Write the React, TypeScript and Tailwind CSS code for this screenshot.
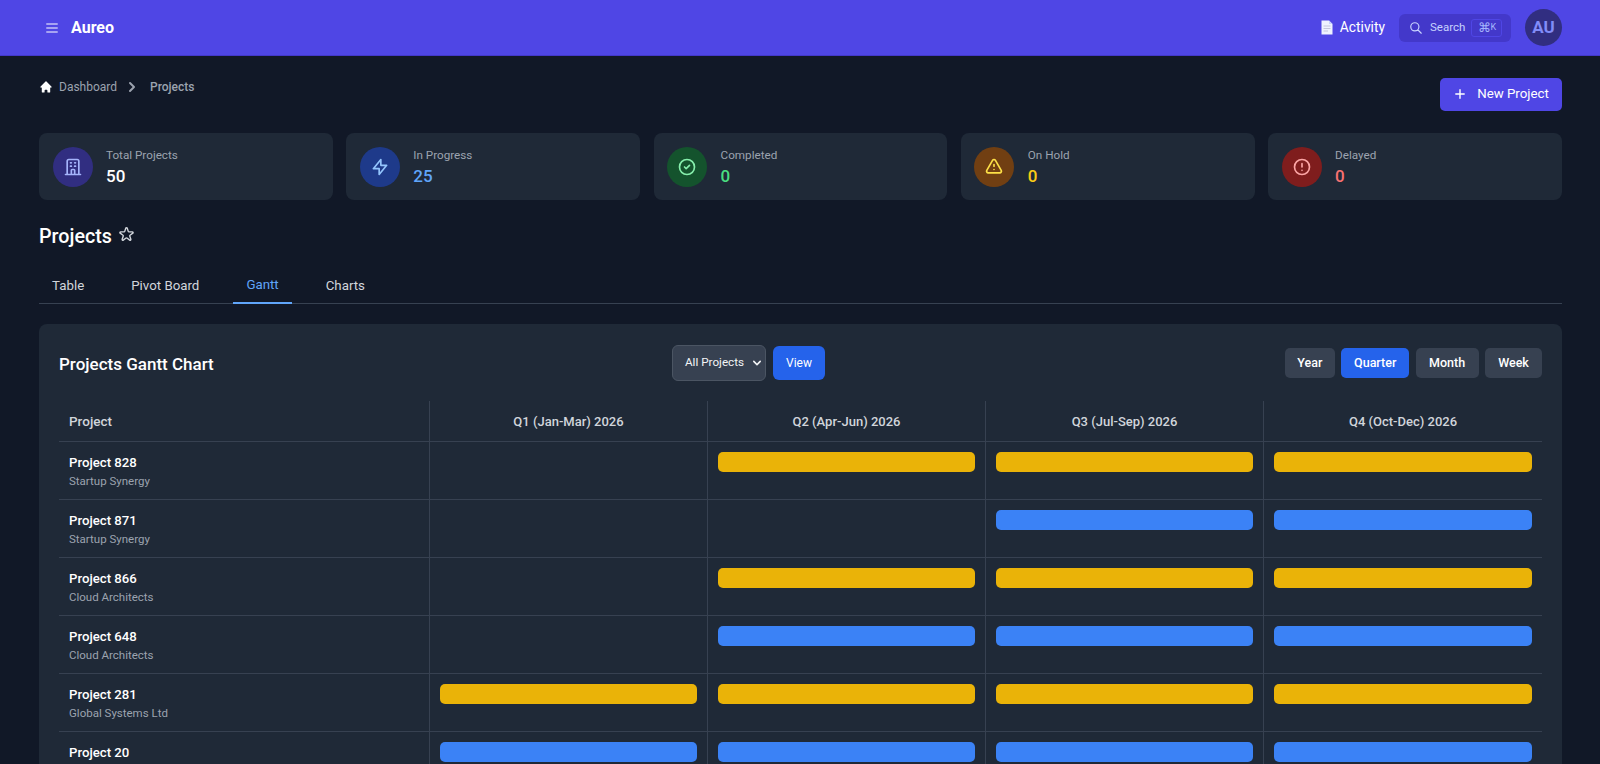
import React from "react";
import {
  HiOutlineMenu, HiOutlineSearch, HiHome, HiChevronRight, HiPlus,
  HiOutlineOfficeBuilding, HiOutlineLightningBolt, HiOutlineCheckCircle, HiOutlineExclamation,
  HiOutlineExclamationCircle, HiOutlineStar, HiChevronDown,
} from "react-icons/hi";

const stats = [
  { label: "Total Projects", value: "50", Icon: HiOutlineOfficeBuilding, circle: "bg-[#312e81]", icon: "text-[#a5b4fc]", val: "text-white" },
  { label: "In Progress", value: "25", Icon: HiOutlineLightningBolt, circle: "bg-[#1e3a8a]", icon: "text-[#93c5fd]", val: "text-[#60a5fa]" },
  { label: "Completed", value: "0", Icon: HiOutlineCheckCircle, circle: "bg-[#14532d]", icon: "text-[#86efac]", val: "text-[#4ade80]" },
  { label: "On Hold", value: "0", Icon: HiOutlineExclamation, circle: "bg-[#713f12]", icon: "text-[#fde047]", val: "text-[#facc15]" },
  { label: "Delayed", value: "0", Icon: HiOutlineExclamationCircle, circle: "bg-[#7f1d1d]", icon: "text-[#fca5a5]", val: "text-[#f87171]" },
];

const Y = "bg-[#eab308]";
const B = "bg-[#3b82f6]";
const rows: { name: string; org: string; bars: (string | null)[] }[] = [
  { name: "Project 828", org: "Startup Synergy", bars: [null, Y, Y, Y] },
  { name: "Project 871", org: "Startup Synergy", bars: [null, null, B, B] },
  { name: "Project 866", org: "Cloud Architects", bars: [null, Y, Y, Y] },
  { name: "Project 648", org: "Cloud Architects", bars: [null, B, B, B] },
  { name: "Project 281", org: "Global Systems Ltd", bars: [Y, Y, Y, Y] },
  { name: "Project 20", org: "Global Systems Ltd", bars: [B, B, B, B] },
];

function DocIcon() {
  return (
    <svg width="12" height="15" viewBox="0 0 12 15" className="mr-[7px]">
      <path d="M0.5 0.5H8L11.5 4V14.5H0.5Z" fill="#eef2ff" />
      <path d="M8 0.5V4H11.5Z" fill="#c7d2fe" />
      <path d="M2.5 6H9.5M2.5 8.5H9.5M2.5 11H7" stroke="#c4c6dc" strokeWidth="1" />
    </svg>
  );
}

export default function App() {
  return (
    <div className="h-screen overflow-hidden bg-[#111827] text-white font-['Roboto','Noto_Sans',sans-serif]">
      <header className="h-[56px] bg-[#4f46e5] border-b border-[#4338ca] flex items-center pl-[43.5px] pr-[38px]">
        <HiOutlineMenu className="w-[16px] h-[16px] text-white mr-[11.5px] [&_path]:[stroke-width:1.5]" />
        <span className="text-[16px] font-bold">Aureo</span>
        <div className="ml-auto flex items-center">
          <DocIcon />
          <span className="text-[13.8px] text-white mr-[14px]">Activity</span>
          <div className="w-[112px] h-[28px] rounded-[6px] bg-[#4338ca] flex items-center pl-[10px] text-[#c7d2fe] mr-[14px]">
            <HiOutlineSearch className="w-[14px] h-[14px] mr-[7px]" />
            <span className="text-[11.5px] mr-[6px]">Search</span>
            <span className="w-[31px] h-[18px] rounded-[3px] border border-[#4f46e5] bg-[#4338ca] text-[#a5b4fc] flex items-center justify-center leading-none">
              <span className="text-[13px]">⌘</span>
              <span className="text-[9px]">K</span>
            </span>
          </div>
          <div className="w-[37px] h-[37px] rounded-full bg-[#312e81] text-[#818cf8] flex items-center justify-center text-[17px] font-bold">AU</div>
        </div>
      </header>

      <main className="pl-[39px] pr-[38px]">
        <div className="flex items-start justify-between pt-[21.5px]">
          <nav className="flex items-center h-[18px] text-[12px] text-[#9ca3af]">
            <HiHome className="w-[14px] h-[14px] text-white mr-[6px]" />
            <span>Dashboard</span>
            <HiChevronRight className="w-[20px] h-[20px] mx-[5px] text-[#9ca3af]" />
            <span className="font-medium ml-[3px]">Projects</span>
          </nav>
          <button className="h-[33.5px] w-[122px] rounded-[5px] bg-[#4f46e5] flex items-center justify-center text-[13.3px]">
            <HiPlus className="w-[14px] h-[14px] mr-[10px]" />
            New Project
          </button>
        </div>

        <div className="grid grid-cols-5 gap-[13.4px] mt-[22px]">
          {stats.map((s) => (
            <div key={s.label} className="h-[67px] rounded-[8px] bg-[#1f2937] flex items-center pl-[13.5px]">
              <div className={`w-[40px] h-[40px] rounded-full flex items-center justify-center ${s.circle}`}>
                <s.Icon className={`w-[20px] h-[20px] ${s.icon}`} />
              </div>
              <div className="ml-[13.5px] mt-[3px]">
                <div className="text-[11.7px] leading-[16px] text-[#9ca3af]">{s.label}</div>
                <div className={`text-[17px] leading-[26px] font-medium ${s.val}`}>{s.value}</div>
              </div>
            </div>
          ))}
        </div>

        <div className="flex items-center mt-[21px] h-[28px]">
          <h1 className="text-[19.7px] font-medium pt-[3px]">Projects</h1>
          <HiOutlineStar className="w-[17px] h-[17px] ml-[6px] mb-[2px] text-[#d1d5db]" />
        </div>

        <div className="flex mt-[18px] h-[37px] border-b border-[#374151] text-[13.3px] text-[#d1d5db]">
          <span className="px-[13px] pt-[9px]">Table</span>
          <span className="ml-[21px] px-[13px] pt-[9px]">Pivot Board</span>
          <span className="ml-[21px] px-[13px] pt-[8px] h-[37px] border-b-2 border-[#60a5fa] text-[#60a5fa]">Gantt</span>
          <span className="ml-[21px] px-[13px] pt-[9px]">Charts</span>
        </div>

        <section className="mt-[20px] rounded-[8px] bg-[#1f2937] px-[20px] pt-[20.5px] pb-[20px]">
          <div className="relative flex items-center justify-between h-[36px]">
            <h2 className="text-[17px] font-medium pt-[4px]">Projects Gantt Chart</h2>
            <div className="absolute left-[613px] top-0 flex items-center">
              <div className="w-[94px] h-[36px] rounded-[6px] border border-[#4b5563] bg-[#374151] flex items-center pl-[12px] text-[11.7px] text-[#f3f4f6]">
                All Projects
                <HiChevronDown className="w-[16px] h-[16px] ml-auto mr-[0px]" />
              </div>
              <button className="ml-[7px] w-[52px] h-[34px] rounded-[6px] bg-[#2563eb] text-[12px]">View</button>
            </div>
            <div className="flex items-center gap-[6.4px] mt-[1px] text-[12.5px] font-medium">
              <button className="w-[50px] h-[30px] rounded-[5px] bg-[#374151]">Year</button>
              <button className="w-[68px] h-[30px] rounded-[5px] bg-[#2563eb]">Quarter</button>
              <button className="w-[63px] h-[30px] rounded-[5px] bg-[#374151]">Month</button>
              <button className="w-[57px] h-[30px] rounded-[5px] bg-[#374151]">Week</button>
            </div>
          </div>

          <div className="grid grid-cols-[371px_repeat(4,1fr)] mt-[20.5px]">
            <div className="h-[41px] pl-[10px] pt-[1px] flex items-center border-b border-[#374151] border-r text-[13.5px] font-medium text-[#d1d5db]">Project</div>
            {["Q1 (Jan-Mar) 2026", "Q2 (Apr-Jun) 2026", "Q3 (Jul-Sep) 2026", "Q4 (Oct-Dec) 2026"].map((q, i) => (
              <div key={q} className={`h-[41px] pt-[1px] flex items-center justify-center border-b border-[#374151] text-[13px] font-medium text-[#d1d5db] ${i < 3 ? "border-r" : ""}`}>{q}</div>
            ))}
            {rows.map((r) => (
              <React.Fragment key={r.name}>
                <div className="h-[58px] pl-[10px] pt-[11px] border-b border-r border-[#374151]">
                  <div className="text-[13.2px] leading-[20px] font-medium">{r.name}</div>
                  <div className="text-[11.5px] leading-[17px] text-[#9ca3af]">{r.org}</div>
                </div>
                {r.bars.map((b, i) => (
                  <div key={i} className={`h-[58px] px-[10px] pt-[10px] border-b border-[#374151] ${i < 3 ? "border-r" : ""}`}>
                    {b && <div className={`h-[20px] rounded-[5px] ${b}`} />}
                  </div>
                ))}
              </React.Fragment>
            ))}
          </div>
        </section>
      </main>
    </div>
  );
}
